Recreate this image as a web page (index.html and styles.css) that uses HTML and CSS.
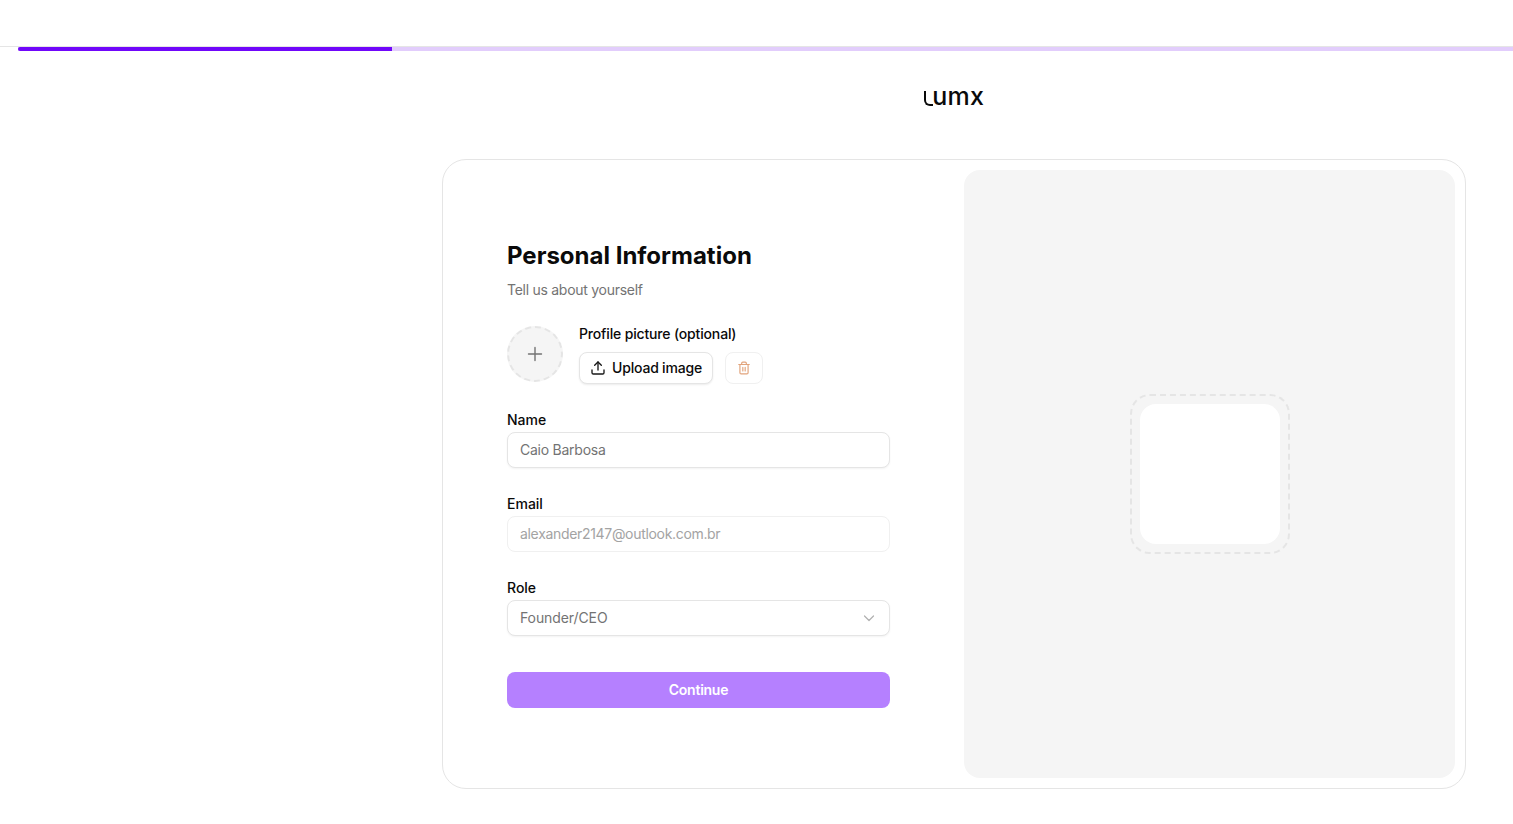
FILE: index.html
```html
<!DOCTYPE html>
<html lang="en">
<head>
<meta charset="utf-8">
<title>Personal Information</title>
<link rel="stylesheet" href="styles.css">
</head>
<body>
<header class="topbar"></header>
<div class="progress"><div class="progress-fill"></div></div>
<div class="logo-row"><span class="logo"><span class="logo-l">l</span>umx</span></div>
<main class="card">
  <section class="form-side">
    <form class="form">
      <h1 class="title">Personal Information</h1>
      <p class="subtitle">Tell us about yourself</p>
      <div class="avatar-row">
        <div class="avatar">
          <svg width="16" height="16" viewBox="0 0 16 16" fill="none" stroke="#737373" stroke-width="1.4" stroke-linecap="round"><path d="M8 1.5v13M1.5 8h13"/></svg>
        </div>
        <div class="avatar-side">
          <div class="avatar-label">Profile picture (optional)</div>
          <div class="avatar-actions">
            <button type="button" class="btn-upload">
              <svg width="16" height="16" viewBox="0 0 24 24" fill="none" stroke="#171717" stroke-width="2" stroke-linecap="round" stroke-linejoin="round"><path d="M12 15V3"/><path d="M7 8l5-5 5 5"/><path d="M3 15v4a2 2 0 0 0 2 2h14a2 2 0 0 0 2-2v-4"/></svg>
              Upload image
            </button>
            <button type="button" class="btn-trash" aria-label="Remove image">
              <svg width="14" height="14" viewBox="0 0 24 24" fill="none" stroke="#e2a47c" stroke-width="2" stroke-linecap="round" stroke-linejoin="round"><path d="M3 6h18"/><path d="M19 6v14a2 2 0 0 1-2 2H7a2 2 0 0 1-2-2V6"/><path d="M8 6V4a2 2 0 0 1 2-2h4a2 2 0 0 1 2 2v2"/><path d="M10 11v6M14 11v6"/></svg>
            </button>
          </div>
        </div>
      </div>
      <div class="field">
        <label class="label" for="name">Name</label>
        <input class="input input-name" id="name" type="text" value="Caio Barbosa">
      </div>
      <div class="field">
        <label class="label" for="email">Email</label>
        <input class="input input-disabled" id="email" type="text" value="alexander2147@outlook.com.br" disabled>
      </div>
      <div class="field">
        <span class="label">Role</span>
        <div class="input select">
          <span>Founder/CEO</span>
          <svg width="12" height="12" viewBox="0 0 12 12" fill="none" stroke="#b0b0b0" stroke-width="1.2" stroke-linecap="round" stroke-linejoin="round"><path d="M1.5 4l4.5 4.5L10.5 4"/></svg>
        </div>
      </div>
      <button type="button" class="btn-continue">Continue</button>
    </form>
  </section>
  <aside class="preview">
    <div class="preview-frame"><div class="preview-tile"></div></div>
  </aside>
</main>
</body>
</html>
```
FILE: styles.css
```css
* { box-sizing: border-box; }
html, body { margin: 0; padding: 0; background: #fff; }
body { font-family: Inter, "Noto Sans", sans-serif; color: #0a0a0a; height: 824px; overflow: hidden; }

.topbar { height: 47px; border-bottom: 1px solid #e5e5e5; }
.progress { margin-left: 18px; height: 4px; background: #e2cdfc; }
.progress-fill { width: 374.4px; height: 4px; background: #7007fa; border-radius: 2px 0 0 2px; }

.logo-row { height: 108px; display: flex; justify-content: center; padding: 29px 0 0 394px; }
.logo { font-size: 25px; font-weight: 500; line-height: 32px; height: 32px; letter-spacing: 0.2px; }
.logo-l { display: inline-block; position: relative; width: 9.5px; color: transparent; }
.logo-l::after { content: ""; position: absolute; left: 1px; top: 11px; width: 7px; height: 13px; border-left: 2.4px solid #0a0a0a; border-bottom: 2.2px solid #0a0a0a; border-bottom-left-radius: 6px; }

.card { margin-left: 442px; width: 1024px; height: 630px; border: 1px solid #e5e5e5; border-radius: 24px; padding: 10px; display: flex; }
.form-side { flex: 1; padding: 0 0 1px 54px; display: flex; flex-direction: column; justify-content: center; }
.form { width: 383px; display: flex; flex-direction: column; }
.title { margin: 1px 0 0; font-size: 24px; line-height: 32px; font-weight: 700; color: #0a0a0a; }
.subtitle { margin: 8px 0 0; font-size: 14px; line-height: 20px; color: #737373; letter-spacing: -0.27px; }

.avatar-row { margin-top: 26px; display: flex; gap: 16px; }
.avatar { width: 56px; height: 56px; border-radius: 50%; border: 2px dashed #e5e5e5; background: #f5f5f5; display: flex; align-items: center; justify-content: center; }
.avatar-side { display: flex; flex-direction: column; gap: 10px; }
.avatar-label { font-size: 14px; line-height: 16px; font-weight: 500; letter-spacing: -0.16px; }
.avatar-actions { display: flex; gap: 12px; }
.btn-upload { height: 32px; width: 134px; padding: 0; font: 500 14px/20px Inter, sans-serif; letter-spacing: -0.2px; color: #0a0a0a; background: #fff; border: 1px solid #e5e5e5; border-radius: 8px; box-shadow: 0 1px 2px rgba(0,0,0,.08); display: flex; align-items: center; justify-content: center; gap: 6px; }
.btn-trash { height: 32px; width: 38px; padding: 0; background: #fff; border: 1px solid #f0f0f0; border-radius: 8px; display: flex; align-items: center; justify-content: center; }

.field { display: flex; flex-direction: column; gap: 4px; margin-bottom: 28px; }
.avatar-row + .field { margin-top: 28px; }
.label { font-size: 14px; line-height: 16px; font-weight: 500; color: #0a0a0a; }
.input { width: 100%; height: 36px; padding: 0 12px; font: 400 14px/20px Inter, sans-serif; color: #737373; background: #fff; border: 1px solid #e5e5e5; border-radius: 8px; box-shadow: 0 1px 2px rgba(0,0,0,.05); outline: none; }
.input-name { letter-spacing: -0.25px; padding-bottom: 2px; }
.input-disabled { color: #a3a3a3; border-color: #f0f0f0; box-shadow: none; -webkit-text-fill-color: #a3a3a3; opacity: 1; letter-spacing: -0.32px; padding-bottom: 2px; }
.select { display: flex; align-items: center; justify-content: space-between; padding-right: 14px; letter-spacing: -0.1px; }
.field:last-of-type { margin-bottom: 36px; }
.btn-continue { height: 36px; width: 100%; padding: 0; font: 600 14px/20px Inter, sans-serif; letter-spacing: -0.25px; color: #fff; background: #b580ff; border: 0; border-radius: 8px; }

.preview { width: 491px; background: #f5f5f5; border-radius: 16px; display: flex; align-items: center; justify-content: center; }
.preview-frame { width: 160px; height: 160px; padding: 8px; border: 2px dashed #e5e5e5; border-radius: 20px; }
.preview-tile { width: 140px; height: 140px; background: #fff; border-radius: 16px; }
```
